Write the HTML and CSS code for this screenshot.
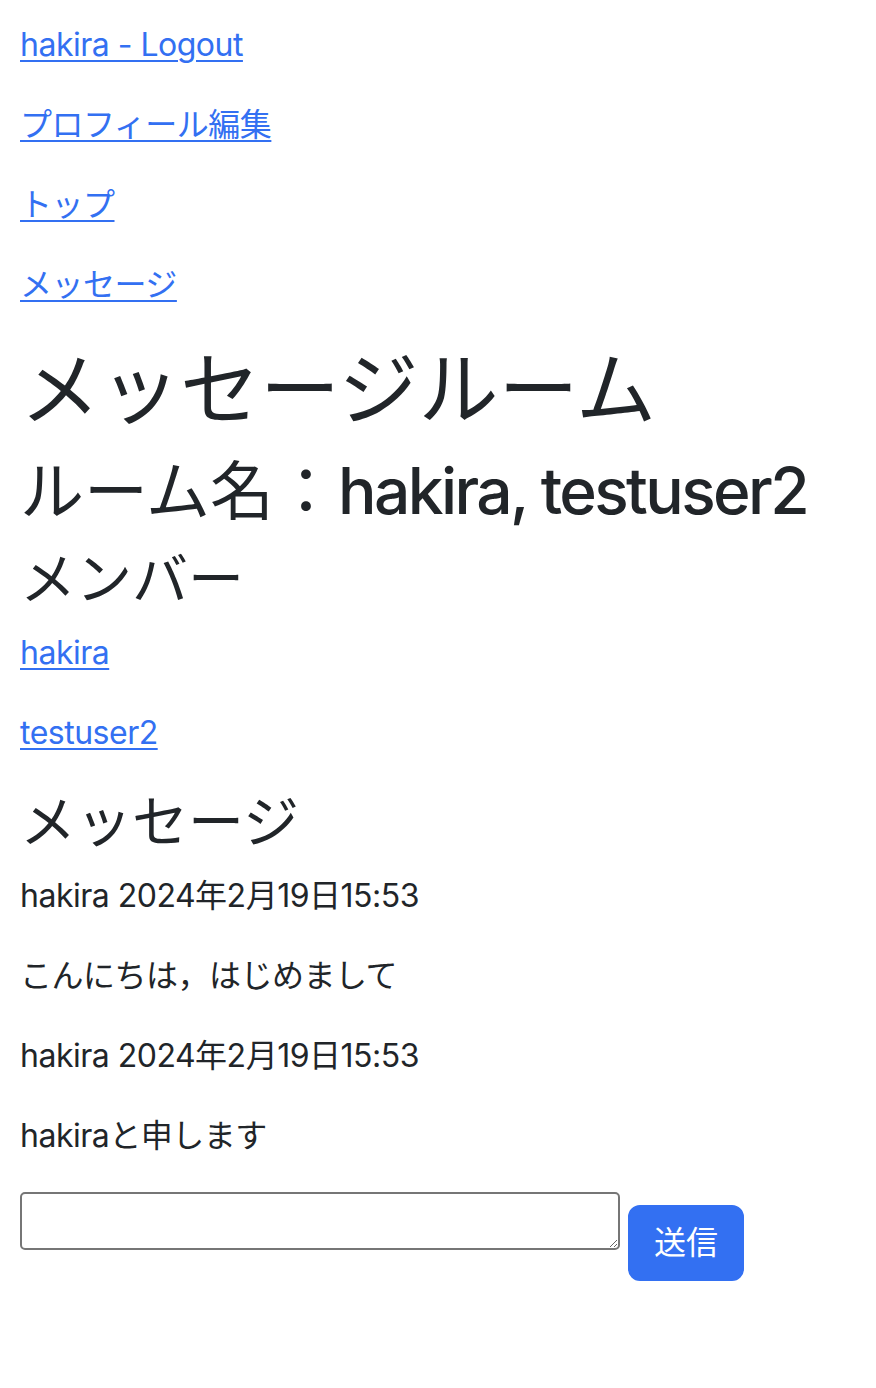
FILE: index.html
```html
<!DOCTYPE html>
<html lang="ja">
<head>
<meta charset="utf-8">
<title>メッセージルーム</title>
<link rel="stylesheet" href="styles.css">
</head>
<body>
<div class="page">
  <p><a class="link" href="#">hakira - Logout</a></p>
  <p><a class="link" href="#">プロフィール編集</a></p>
  <p><a class="link" href="#">トップ</a></p>
  <p><a class="link" href="#">メッセージ</a></p>

  <h1 class="h1"><span class="ja">メッセージルーム</span></h1>
  <h2 class="h2"><span class="ja">ルーム名：</span><span class="latin">hakira, testuser2</span></h2>
  <h3 class="h3"><span class="ja">メンバー</span></h3>
  <p><a class="link" href="#">hakira</a></p>
  <p><a class="link" href="#">testuser2</a></p>

  <h3 class="h3"><span class="ja">メッセージ</span></h3>
  <p>hakira 2024年2月19日15:53</p>
  <p>こんにちは，はじめまして</p>
  <p>hakira 2024年2月19日15:53</p>
  <p>hakiraと申します</p>

  <form class="send-form">
    <textarea class="msg-input" name="body"></textarea>
    <button class="btn-send" type="button">送信</button>
  </form>
</div>
</body>
</html>
```

FILE: styles.css
```css
* { box-sizing: border-box; }

html, body {
  margin: 0;
  padding: 0;
  background: #ffffff;
}

body {
  font-family: Inter, "Noto Sans CJK JP", sans-serif;
  font-size: 32px;
  line-height: 48px;
  letter-spacing: -0.5px;
  color: #212529;
}

.page {
  padding: 21px 20px 0 20px;
}

p {
  margin: 0 0 32px 0;
}

.link {
  color: #3370f2;
  text-decoration: underline;
  text-decoration-thickness: 2px;
  text-underline-offset: 4px;
}

.h1, .h2, .h3 {
  margin: 0 0 16px 0;
  font-weight: 500;
  line-height: 1.2;
  color: #212529;
}

.h1 { font-size: 80px; }
.h2 { font-size: 64px; }
.h3 { font-size: 56px; }

.ja {
  font-weight: 400;
  letter-spacing: 0;
}

.latin {
  letter-spacing: -2.6px;
}

.send-form {
  display: flex;
  align-items: flex-start;
  gap: 8px;
  margin: 0;
}

.msg-input {
  width: 600px;
  height: 58px;
  border: 2px solid #767676;
  border-radius: 5px;
  resize: both;
  margin: 0;
  padding: 4px;
  font-family: "Liberation Mono", monospace;
  font-size: 26px;
  background: #ffffff;
}

.btn-send {
  margin-top: 13px;
  width: 116px;
  height: 76px;
  padding: 12px 24px;
  border: 2px solid #3370f2;
  border-radius: 12px;
  background: #3370f2;
  color: #ffffff;
  font-family: Inter, "Noto Sans CJK JP", sans-serif;
  font-size: 32px;
  line-height: 48px;
  font-weight: 400;
  letter-spacing: 0;
}
```
